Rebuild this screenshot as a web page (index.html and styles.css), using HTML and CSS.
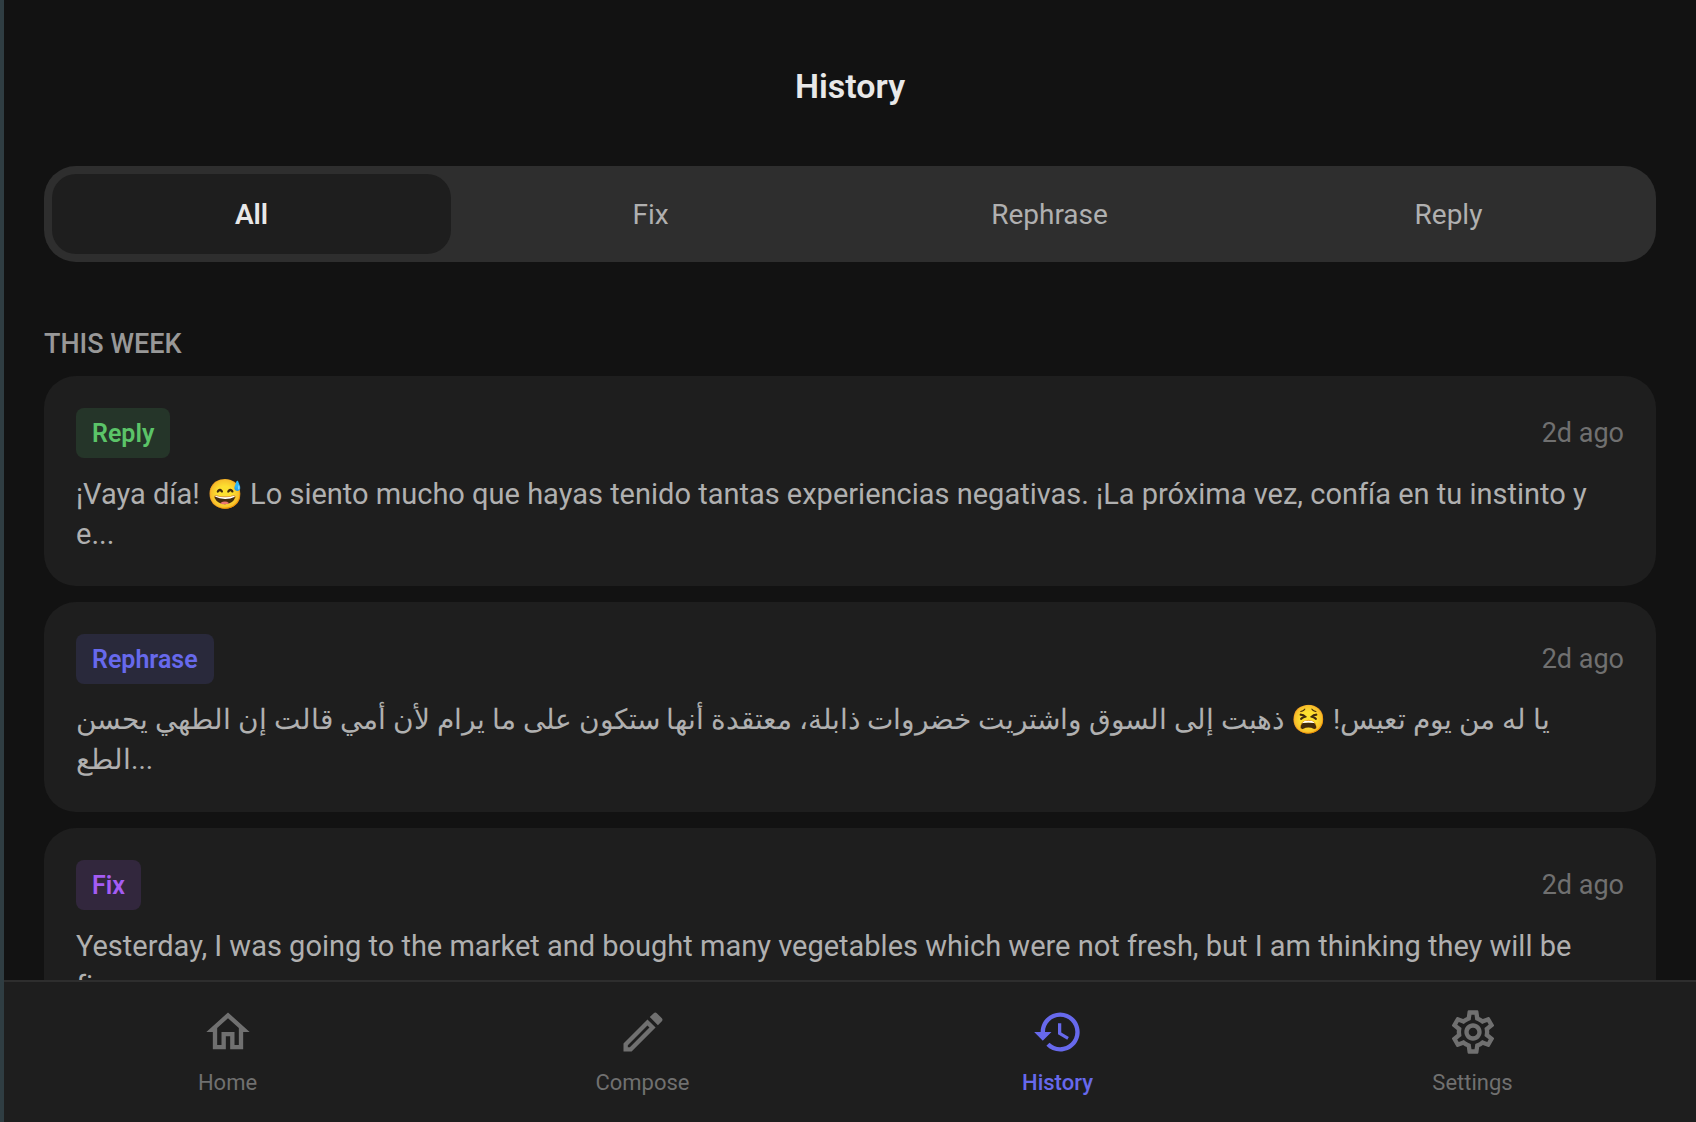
FILE: index.html
```html
<!DOCTYPE html>
<html lang="en">
<head>
    <meta charset="UTF-8">
    <meta name="viewport" content="width=device-width, initial-scale=1.0">
    <title>History</title>
    <link rel="stylesheet" href="styles.css">
</head>
<body>
    <div class="app">
        <main class="content">
            <h1>History</h1>

            <div class="tabs">
                <button type="button" class="tab active-tab">All</button>
                <button type="button" class="tab">Fix</button>
                <button type="button" class="tab">Rephrase</button>
                <button type="button" class="tab">Reply</button>
            </div>

            <h2>THIS WEEK</h2>

            <div class="entries">
                <article class="card">
                    <div class="card-header">
                        <span class="badge badge-reply">Reply</span>
                        <span class="time">2d ago</span>
                    </div>
                    <p class="preview">¡Vaya día! 😅 Lo siento mucho que hayas tenido tantas experiencias negativas. ¡La próxima vez, confía en tu instinto y<br>e...</p>
                </article>

                <article class="card">
                    <div class="card-header">
                        <span class="badge badge-rephrase">Rephrase</span>
                        <span class="time">2d ago</span>
                    </div>
                    <p class="preview preview-arabic" lang="ar">يا له من يوم تعيس! 😫 ذهبت إلى السوق واشتريت خضروات ذابلة، معتقدة أنها ستكون على ما يرام لأن أمي قالت إن الطهي يحسن<br>الطع...</p>
                </article>

                <article class="card">
                    <div class="card-header">
                        <span class="badge badge-fix">Fix</span>
                        <span class="time">2d ago</span>
                    </div>
                    <p class="preview">Yesterday, I was going to the market and bought many vegetables which were not fresh, but I am thinking they will be<br>fi...</p>
                </article>
            </div>
        </main>

        <nav class="bottom-nav">
            <a href="#home" class="nav-item">
                <svg class="icon" viewBox="0 0 24 24" aria-hidden="true"><path d="M12 5.69l5 4.5V18h-2v-6H9v6H7v-7.81l5-4.5M12 3L2 12h3v8h6v-6h2v6h6v-8h3L12 3z"/></svg>
                <span>Home</span>
            </a>
            <a href="#compose" class="nav-item">
                <svg class="icon" viewBox="0 0 24 24" aria-hidden="true"><path d="M14.06 9.02l.92.92L5.92 19H5v-.92l9.06-9.06M17.66 3c-.25 0-.51.1-.7.29l-1.83 1.83 3.75 3.75 1.83-1.83c.39-.39.39-1.02 0-1.41l-2.34-2.34c-.2-.2-.45-.29-.71-.29zm-3.6 3.19L3 17.25V21h3.75L17.81 9.94l-3.75-3.75z"/></svg>
                <span>Compose</span>
            </a>
            <a href="#history" class="nav-item active-item">
                <svg class="icon" viewBox="0 0 24 24" aria-hidden="true"><path d="M13 3c-4.97 0-9 4.03-9 9H1l3.89 3.89.07.14L9 12H6c0-3.87 3.13-7 7-7s7 3.13 7 7-3.13 7-7 7c-1.93 0-3.68-.79-4.94-2.06l-1.42 1.42C8.27 19.99 10.51 21 13 21c4.97 0 9-4.03 9-9s-4.03-9-9-9zm-1 5v5l4.28 2.54.72-1.21-3.5-2.08V8H12z"/></svg>
                <span>History</span>
            </a>
            <a href="#settings" class="nav-item">
                <svg class="icon" viewBox="0 0 24 24" aria-hidden="true"><path d="M19.43 12.98c.04-.32.07-.64.07-.98 0-.34-.03-.66-.07-.98l2.11-1.65c.19-.15.24-.42.12-.64l-2-3.46c-.09-.16-.26-.25-.44-.25-.06 0-.12.01-.17.03l-2.49 1c-.52-.4-1.08-.73-1.69-.98l-.38-2.65C14.46 2.18 14.25 2 14 2h-4c-.25 0-.46.18-.49.42l-.38 2.65c-.61.25-1.17.59-1.69.98l-2.49-1c-.06-.02-.12-.03-.18-.03-.17 0-.34.09-.43.25l-2 3.46c-.13.22-.07.49.12.64l2.11 1.65c-.04.32-.07.65-.07.98 0 .33.03.66.07.98l-2.11 1.65c-.19.15-.24.42-.12.64l2 3.46c.09.16.26.25.44.25.06 0 .12-.01.17-.03l2.49-1c.52.4 1.08.73 1.69.98l.38 2.65c.03.24.24.42.49.42h4c.25 0 .46-.18.49-.42l.38-2.65c.61-.25 1.17-.59 1.69-.98l2.49 1c.06.02.12.03.18.03.17 0 .34-.09.43-.25l2-3.46c.12-.22.07-.49-.12-.64l-2.11-1.65zm-1.98-1.71c.04.31.05.52.05.73 0 .21-.02.43-.05.73l-.14 1.13.89.7 1.08.84-.7 1.21-1.27-.51-1.04-.42-.9.68c-.43.32-.84.56-1.25.73l-1.06.43-.16 1.13-.2 1.35h-1.4l-.19-1.35-.16-1.13-1.06-.43c-.43-.18-.83-.41-1.23-.71l-.91-.7-1.06.43-1.27.51-.7-1.21 1.08-.84.89-.7-.14-1.13c-.03-.31-.05-.54-.05-.74s.02-.43.05-.73l.14-1.13-.89-.7-1.08-.84.7-1.21 1.27.51 1.04.42.9-.68c.43-.32.84-.56 1.25-.73l1.06-.43.16-1.13.2-1.35h1.39l.19 1.35.16 1.13 1.06.43c.43.18.83.41 1.23.71l.91.7 1.06-.43 1.27-.51.7 1.21-1.07.85-.89.7.14 1.13zM12 8c-2.21 0-4 1.79-4 4s1.79 4 4 4 4-1.79 4-4-1.79-4-4-4zm0 6c-1.1 0-2-.9-2-2s.9-2 2-2 2 .9 2 2-.9 2-2 2z"/></svg>
                <span>Settings</span>
            </a>
        </nav>
    </div>
</body>
</html>
```

FILE: styles.css
```css
* {
    box-sizing: border-box;
}
body {
    margin: 0;
    font-family: Roboto, "Noto Sans", sans-serif;
    font-size: 28px;
    line-height: 40px;
    background-color: #121212;
    color: #b0b0b0;
}
.app {
    display: flex;
    flex-direction: column;
    height: 100vh;
    border-left: 4px solid #2f3d42;
}
.content {
    flex: 1;
    min-height: 0;
    overflow-y: auto;
    scrollbar-width: none;
    padding: 0 40px;
}
h1 {
    margin: 0;
    padding: 62px 0 56px;
    font-size: 34px;
    line-height: 48px;
    font-weight: 600;
    text-align: center;
    color: #e8e8e8;
}
.tabs {
    display: flex;
    padding: 8px;
    background-color: #2e2e2e;
    border-radius: 32px;
}
.tab {
    flex: 1;
    padding: 21px 0 19px;
    font: inherit;
    color: inherit;
    background: none;
    border: none;
    border-radius: 24px;
    cursor: pointer;
}
.active-tab {
    font-weight: 600;
    color: #e8e8e8;
    background-color: #1e1e1e;
}
h2 {
    margin: 64px 0 14px;
    font-size: 27px;
    line-height: 36px;
    font-weight: 500;
    color: #989898;
}
.entries {
    display: flex;
    flex-direction: column;
    gap: 16px;
}
.card {
    padding: 32px;
    background-color: #1e1e1e;
    border-radius: 32px;
}
.card-header {
    display: flex;
    justify-content: space-between;
    align-items: center;
    margin-bottom: 16px;
}
.preview {
    margin: 0;
    font-size: 29px;
    font-variant-ligatures: none;
}
/* arabic needs its ligatures (lam-alef) */
.preview-arabic {
    font-size: 28px;
    font-variant-ligatures: normal;
}
.badge {
    padding: 9px 16px 7px;
    font-size: 25px;
    line-height: 34px;
    font-weight: 600;
    border-radius: 8px;
}
.badge-reply {
    color: #5bc468;
    background-color: #253529;
}
.badge-rephrase {
    color: #6769ec;
    background-color: #29293b;
}
.badge-fix {
    color: #a45cf3;
    background-color: #32273d;
}
.time {
    font-size: 27px;
    line-height: 34px;
    color: #707070;
}
.bottom-nav {
    display: flex;
    padding: 24px 16px 23px;
    background-color: #1e1e1e;
    border-top: 2px solid #2e2e2e;
}
.nav-item {
    flex: 1;
    display: flex;
    flex-direction: column;
    align-items: center;
    gap: 9px;
    font-size: 22px;
    line-height: 32px;
    color: #707070;
    text-decoration: none;
}
.active-item {
    font-weight: 500;
    color: #6769ec;
}
.icon {
    width: 52px;
    height: 52px;
    fill: currentColor;
}
```
